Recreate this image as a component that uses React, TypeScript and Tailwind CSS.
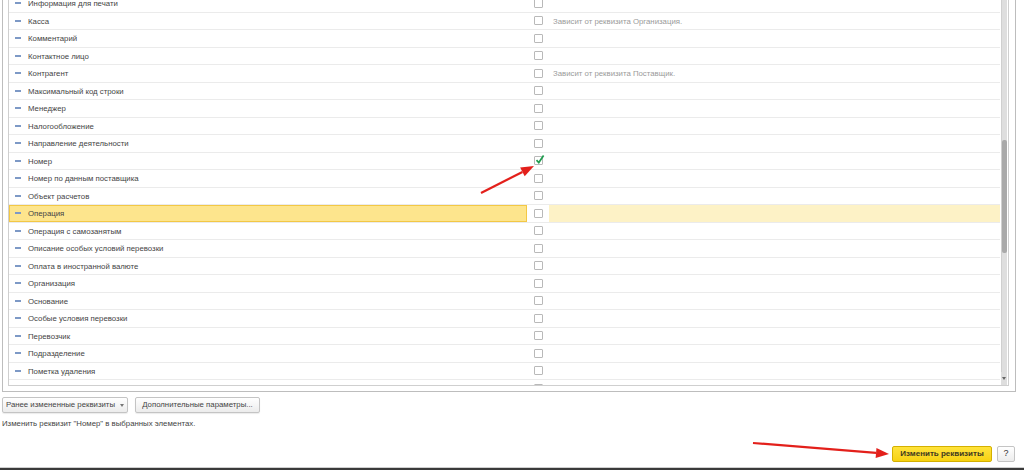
import React from "react";

type Row = {
  name: string;
  note?: string;
  checked?: boolean;
  active?: boolean;
};

const rows: Row[] = [
  { name: "Информация для печати" },
  { name: "Касса", note: "Зависит от реквизита Организация." },
  { name: "Комментарий" },
  { name: "Контактное лицо" },
  { name: "Контрагент", note: "Зависит от реквизита Поставщик." },
  { name: "Максимальный код строки" },
  { name: "Менеджер" },
  { name: "Налогообложение" },
  { name: "Направление деятельности" },
  { name: "Номер", checked: true },
  { name: "Номер по данным поставщика" },
  { name: "Объект расчетов" },
  { name: "Операция", active: true },
  { name: "Операция с самозанятым" },
  { name: "Описание особых условий перевозки" },
  { name: "Оплата в иностранной валюте" },
  { name: "Организация" },
  { name: "Основание" },
  { name: "Особые условия перевозки" },
  { name: "Перевозчик" },
  { name: "Подразделение" },
  { name: "Пометка удаления" },
  { name: "" },
];

const Checkbox = ({ checked }: { checked?: boolean }) => (
  <span className="relative block w-[9px] h-[9px] border border-[#b9b9b9] rounded-[1px] bg-white">
    {checked && (
      <svg
        className="absolute left-[0px] top-[-3px]"
        width="10"
        height="11"
        viewBox="0 0 10 11"
      >
        <path
          d="M1.5 6.2 L3.8 8.6 L8.6 1.6"
          fill="none"
          stroke="#1f9d4f"
          strokeWidth="1.7"
        />
      </svg>
    )}
  </span>
);

const AttrRow = ({ row }: { row: Row }) => (
  <div className="grid grid-cols-[518px_21px_1fr] h-[17.5px] border-b border-[#ebebeb]">
    <div
      className={
        row.active
          ? "flex items-center bg-[#fde58d] border border-[#f3c845] pl-[5px]"
          : "flex items-center pl-[6px]"
      }
    >
      {row.name && <span className="block w-[6px] h-[2px] bg-[#7d99c6]" />}
      <span className="ml-[7px] pt-[1px] text-[7.8px] leading-none text-[#444] whitespace-nowrap">
        {row.name}
      </span>
    </div>
    <div className="flex items-center pl-[7px]">
      <Checkbox checked={row.checked} />
    </div>
    <div
      className={
        row.active
          ? "flex items-center pl-[5px] ml-[1px] bg-[#fdf2c6]"
          : "flex items-center pl-[5px]"
      }
    >
      {row.note && (
        <span className="pt-[1px] text-[7.8px] leading-none text-[#9a9a9a] whitespace-nowrap">
          {row.note}
        </span>
      )}
    </div>
  </div>
);

const Arrow = ({
  x1,
  y1,
  x2,
  y2,
}: {
  x1: number;
  y1: number;
  x2: number;
  y2: number;
}) => {
  const a = Math.atan2(y2 - y1, x2 - x1);
  const len = 13;
  const w = 5;
  const bx = x2 - len * Math.cos(a);
  const by = y2 - len * Math.sin(a);
  const px = -Math.sin(a) * w;
  const py = Math.cos(a) * w;
  return (
    <g>
      <line x1={x1} y1={y1} x2={bx} y2={by} stroke="#e3201b" strokeWidth="2.2" />
      <polygon
        points={`${x2},${y2} ${bx + px},${by + py} ${bx - px},${by - py}`}
        fill="#e3201b"
      />
    </g>
  );
};

const App = () => {
  return (
    <div className="relative w-[1024px] h-[470px] bg-white overflow-hidden flex flex-col font-['Liberation_Sans',Arial,sans-serif]">
      {/* outer panel */}
      <div className="ml-[2px] mr-[8px] h-[392px] border-x border-b border-[#bdbdbd] pl-[5px] pr-[6px] pb-[5px]">
        <div className="h-[386px] border-x border-b border-[#cfcfcf] flex overflow-hidden">
          <div className="flex-1 overflow-hidden">
            <div className="mt-[-4.8px]">
              {rows.map((r, i) => (
                <AttrRow key={i} row={r} />
              ))}
            </div>
          </div>
          <div className="w-[8px] flex flex-col pl-[1px] pr-[1px]">
            <div className="flex-1 bg-[#dedede] border-l border-[#cfcfcf] pt-[140px]">
              <div className="h-[113px] bg-[#a9a9a9] rounded-[2px]" />
            </div>
            <div className="h-[13px] bg-[#dedede] flex items-center justify-center">
              <span className="block w-0 h-0 border-x-[2px] border-x-transparent border-t-[3px] border-t-[#666]" />
            </div>
          </div>
        </div>
      </div>

      {/* buttons under the list */}
      <div className="mt-[5px] ml-[2px] flex gap-[7px]">
        <button className="h-[16px] w-[126px] flex items-center justify-center gap-[5px] whitespace-nowrap border border-[#c4c4c4] rounded-[2px] bg-gradient-to-b from-[#ffffff] to-[#ececec] text-[7.8px] text-[#444] shadow-[0_1px_1px_rgba(0,0,0,0.08)]">
          <span>Ранее измененные реквизиты</span>
          <span className="block w-0 h-0 border-x-[2px] border-x-transparent border-t-[3px] border-t-[#777]" />
        </button>
        <button className="h-[16px] w-[125px] flex items-center justify-center whitespace-nowrap border border-[#c4c4c4] rounded-[2px] bg-gradient-to-b from-[#ffffff] to-[#ececec] text-[7.8px] text-[#444] shadow-[0_1px_1px_rgba(0,0,0,0.08)]">
          Дополнительные параметры...
        </button>
      </div>

      <div className="mt-[5px] ml-[2px] h-[12px] flex items-center text-[7.8px] text-[#444]">
        Изменить реквизит "Номер" в выбранных элементах.
      </div>

      <div className="mt-[16px] mr-[9px] flex justify-end gap-[5px]">
        <button className="h-[16px] w-[100px] flex items-center justify-center whitespace-nowrap border border-[#d4b000] rounded-[2px] bg-gradient-to-b from-[#ffe33a] to-[#f7d20e] text-[8px] font-bold text-[#3d3820]">
          Изменить реквизиты
        </button>
        <button className="h-[16px] w-[18px] flex items-center justify-center border border-[#c4c4c4] rounded-[2px] bg-gradient-to-b from-[#ffffff] to-[#ececec] text-[9px] text-[#333]">
          ?
        </button>
      </div>

      <div className="mt-auto h-[3px] border-t border-[#cfcfcf] bg-[#3a3a3a]" />

      {/* red annotation arrows */}
      <svg
        className="absolute left-0 top-0 pointer-events-none"
        width="1024"
        height="470"
      >
        <Arrow x1={481} y1={193} x2={534} y2={166} />
        <Arrow x1={753} y1={443} x2={889} y2={454} />
      </svg>
    </div>
  );
};

export default App;
